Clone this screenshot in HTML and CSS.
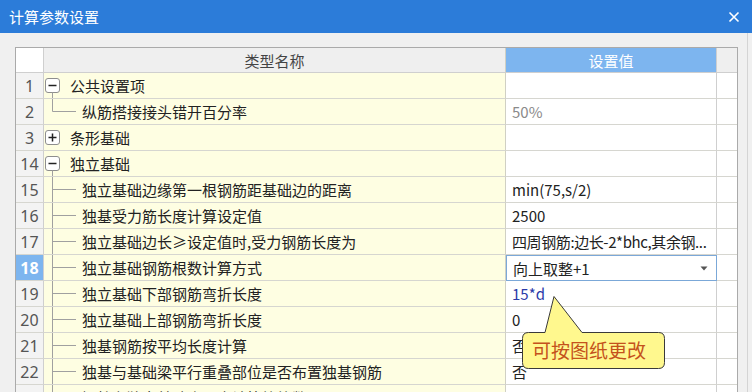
FILE: index.html
```html
<!DOCTYPE html>
<html lang="zh-CN">
<head>
    <meta charset="UTF-8">
    <title>计算参数设置</title>
    <link rel="stylesheet" href="styles.css">
</head>
<body>
    <div class="titlebar">
        <span class="title">计算参数设置</span>
        <svg class="close" width="12" height="12" viewBox="0 0 12 12"><path d="M1.5 1.5 L10.5 10.5 M10.5 1.5 L1.5 10.5" stroke="#fff" stroke-width="1.6"/></svg>
    </div>

    <div class="content">
        <div class="grid">
            <div class="row head">
                <div class="num"></div>
                <div class="name">类型名称</div>
                <div class="val">设置值</div>
                <div class="fill"></div>
            </div>

            <div class="row">
                <div class="num">1</div>
                <div class="name">
                    <svg class="tree" width="26" height="25" viewBox="0 0 26 25"><rect x="1.5" y="5.5" width="14" height="14" rx="2.5" fill="#fff" stroke="#8e8e8e"/><path d="M4.5 12.5 H12.5" stroke="#222" stroke-width="1.5"/><path d="M8.5 19.5 V25" stroke="#a0a0a0"/></svg>
                    <span>公共设置项</span>
                </div>
                <div class="val"></div>
                <div class="fill"></div>
            </div>
            <div class="row">
                <div class="num">2</div>
                <div class="name">
                    <svg class="tree" width="38" height="25" viewBox="0 0 38 25"><path d="M8.5 0 V12.5 H32" stroke="#a0a0a0" fill="none"/></svg>
                    <span>纵筋搭接接头错开百分率</span>
                </div>
                <div class="val muted">50%</div>
                <div class="fill"></div>
            </div>
            <div class="row">
                <div class="num">3</div>
                <div class="name">
                    <svg class="tree" width="26" height="25" viewBox="0 0 26 25"><rect x="1.5" y="5.5" width="14" height="14" rx="2.5" fill="#fff" stroke="#8e8e8e"/><path d="M4.5 12.5 H12.5 M8.5 8.5 V16.5" stroke="#222" stroke-width="1.5"/></svg>
                    <span>条形基础</span>
                </div>
                <div class="val"></div>
                <div class="fill"></div>
            </div>
            <div class="row">
                <div class="num">14</div>
                <div class="name">
                    <svg class="tree" width="26" height="25" viewBox="0 0 26 25"><rect x="1.5" y="5.5" width="14" height="14" rx="2.5" fill="#fff" stroke="#8e8e8e"/><path d="M4.5 12.5 H12.5" stroke="#222" stroke-width="1.5"/><path d="M8.5 19.5 V25" stroke="#a0a0a0"/></svg>
                    <span>独立基础</span>
                </div>
                <div class="val"></div>
                <div class="fill"></div>
            </div>
            <div class="row">
                <div class="num">15</div>
                <div class="name">
                    <svg class="tree" width="38" height="25" viewBox="0 0 38 25"><path d="M8.5 0 V25 M8.5 12.5 H32" stroke="#a0a0a0" fill="none"/></svg>
                    <span>独立基础边缘第一根钢筋距基础边的距离</span>
                </div>
                <div class="val">min(75,s/2)</div>
                <div class="fill"></div>
            </div>
            <div class="row">
                <div class="num">16</div>
                <div class="name">
                    <svg class="tree" width="38" height="25" viewBox="0 0 38 25"><path d="M8.5 0 V25 M8.5 12.5 H32" stroke="#a0a0a0" fill="none"/></svg>
                    <span>独基受力筋长度计算设定值</span>
                </div>
                <div class="val">2500</div>
                <div class="fill"></div>
            </div>
            <div class="row">
                <div class="num">17</div>
                <div class="name">
                    <svg class="tree" width="38" height="25" viewBox="0 0 38 25"><path d="M8.5 0 V25 M8.5 12.5 H32" stroke="#a0a0a0" fill="none"/></svg>
                    <span>独立基础边长≥设定值时,受力钢筋长度为</span>
                </div>
                <div class="val long">四周钢筋:边长-2*bhc,其余钢...</div>
                <div class="fill"></div>
            </div>
            <div class="row">
                <div class="num current">18</div>
                <div class="name">
                    <svg class="tree" width="38" height="25" viewBox="0 0 38 25"><path d="M8.5 0 V25 M8.5 12.5 H32" stroke="#a0a0a0" fill="none"/></svg>
                    <span>独立基础钢筋根数计算方式</span>
                </div>
                <div class="val editing">
                    <span>向上取整+1</span>
                    <svg width="8" height="5" viewBox="0 0 8 5"><path d="M0.5 0.5 H7.5 L4 4.5 Z" fill="#555"/></svg>
                </div>
                <div class="fill"></div>
            </div>
            <div class="row">
                <div class="num">19</div>
                <div class="name">
                    <svg class="tree" width="38" height="25" viewBox="0 0 38 25"><path d="M8.5 0 V25 M8.5 12.5 H32" stroke="#a0a0a0" fill="none"/></svg>
                    <span>独立基础下部钢筋弯折长度</span>
                </div>
                <div class="val changed">15*d</div>
                <div class="fill"></div>
            </div>
            <div class="row">
                <div class="num">20</div>
                <div class="name">
                    <svg class="tree" width="38" height="25" viewBox="0 0 38 25"><path d="M8.5 0 V25 M8.5 12.5 H32" stroke="#a0a0a0" fill="none"/></svg>
                    <span>独立基础上部钢筋弯折长度</span>
                </div>
                <div class="val">0</div>
                <div class="fill"></div>
            </div>
            <div class="row">
                <div class="num">21</div>
                <div class="name">
                    <svg class="tree" width="38" height="25" viewBox="0 0 38 25"><path d="M8.5 0 V25 M8.5 12.5 H32" stroke="#a0a0a0" fill="none"/></svg>
                    <span>独基钢筋按平均长度计算</span>
                </div>
                <div class="val">否</div>
                <div class="fill"></div>
            </div>
            <div class="row">
                <div class="num">22</div>
                <div class="name">
                    <svg class="tree" width="38" height="25" viewBox="0 0 38 25"><path d="M8.5 0 V25 M8.5 12.5 H32" stroke="#a0a0a0" fill="none"/></svg>
                    <span>独基与基础梁平行重叠部位是否布置独基钢筋</span>
                </div>
                <div class="val">否</div>
                <div class="fill"></div>
            </div>
            <div class="row">
                <div class="num">23</div>
                <div class="name">
                    <svg class="tree" width="38" height="25" viewBox="0 0 38 25"><path d="M8.5 0 V25 M8.5 12.5 H32" stroke="#a0a0a0" fill="none"/></svg>
                    <span>短柱在独立基础底层内计算箍筋数量</span>
                </div>
                <div class="val">1</div>
                <div class="fill"></div>
            </div>
        </div>
    </div>

    <!-- 提示气泡 -->
    <div class="tip">
        <svg width="146" height="76" viewBox="0 0 146 76"><path d="M7.5 37.5 H24 L33 1.5 L61 37.5 H137.5 Q143.5 37.5 143.5 43.5 V67.5 Q143.5 73.5 137.5 73.5 H7.5 Q1.5 73.5 1.5 67.5 V43.5 Q1.5 37.5 7.5 37.5 Z" fill="#fff88e" stroke="#3a3a3a"/></svg>
        <span class="tip-text">可按图纸更改</span>
    </div>
</body>
</html>
```

FILE: styles.css
```css
body {
    margin: 0;
    width: 752px;
    height: 392px;
    overflow: hidden;
    background-color: #f0f0f0;
    font-family: "Noto Sans CJK SC", "Noto Sans", sans-serif;
    color: #222;
}
.titlebar {
    height: 33px;
    background-color: #2c7cd9;
    color: #fff;
    display: flex;
    align-items: center;
    justify-content: space-between;
    padding: 0 12px 0 9px;
    font-size: 15px;
}
.close {
    display: block;
}
.content {
    padding: 14px 0 0 15px;
    height: 345px;
    border-right: 1px solid #d4d4d4;
    width: 732px;
}
.grid {
    width: 721px;
    border: 1px solid #aaaaaa;
    border-bottom: none;
    background-color: #fff;
}
.row {
    display: grid;
    grid-template-columns: 28px 462px 211px 20px;
    height: 26px;
}
.row > div {
    box-sizing: border-box;
    border-bottom: 1px solid #d6d6d0;
    display: flex;
    align-items: center;
    white-space: nowrap;
    overflow: hidden;
}
.num {
    justify-content: center;
    background-color: #f3f3f3;
    border-right: 1px solid #cfcfcf;
    color: #555;
    font-family: "Noto Sans", sans-serif;
    font-size: 16px;
}
.num.current {
    background-color: #7db5ef;
    color: #fff;
    font-weight: bold;
}
.name {
    background-color: #fefee2;
    border-right: 1px solid #d0d0c4;
    font-size: 15px;
}
.tree {
    display: block;
    flex-shrink: 0;
}
.val {
    border-right: 1px solid #cfcfcf;
    padding-left: 6px;
    font-size: 15px;
    color: #222;
}
.val.long {
    letter-spacing: -0.4px;
}
.val.muted {
    color: #8a8a8a;
}
.val.changed {
    color: #2a3aa8;
}
.val.editing {
    border: 1px solid #7ba8d8;
    justify-content: space-between;
    padding-right: 8px;
}
.fill {
    background-color: #fff;
}
.row.head {
    height: 25px;
}
.row.head > div {
    border-bottom: 1px solid #cfcfcf;
    justify-content: center;
    font-size: 15px;
}
.row.head .num {
    background-color: #fff;
}
.row.head .name {
    background-color: #efefef;
    color: #444;
}
.row.head .val {
    background-color: #7db5ef;
    color: #fff;
    padding-left: 0;
}
.row.head .fill {
    background-color: #efefef;
}
.tip {
    position: absolute;
    left: 521px;
    top: 295px;
    width: 146px;
    height: 76px;
}
.tip svg {
    display: block;
}
.tip-text {
    position: absolute;
    left: 11px;
    top: 37px;
    height: 36px;
    line-height: 36px;
    font-size: 19px;
    color: #c4521c;
}
```
